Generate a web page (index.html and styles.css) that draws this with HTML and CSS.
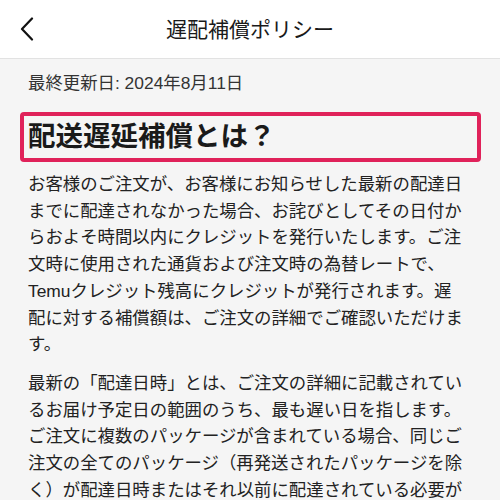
FILE: index.html
```html
<!DOCTYPE html>
<html lang="ja">
<head>
<meta charset="utf-8">
<link rel="stylesheet" href="styles.css">
</head>
<body>
<header class="topbar">
  <svg class="back" width="14" height="24" viewBox="0 0 14 24"><path d="M12 1.5 L2 12 L12 22.5" fill="none" stroke="#111" stroke-width="2.2" stroke-linecap="round" stroke-linejoin="round"/></svg>
  <h1 class="title">遅配補償ポリシー</h1>
</header>
<main class="content">
  <p class="updated">最終更新日: 2024年8月11日</p>
  <div class="highlight">
    <h2 class="heading">配送遅延補償とは？</h2>
  </div>
  <p class="para">お客様のご注文が、お客様にお知らせした最新の配達日までに配達されなかった場合、お詫びとしてその日付からおよそ時間以内にクレジットを発行いたします。ご注文時に使用された通貨および注文時の為替レートで、Temuクレジット残高にクレジットが発行されます。遅配に対する補償額は、ご注文の詳細でご確認いただけます。</p>
  <p class="para">最新の「配達日時」とは、ご注文の詳細に記載されているお届け予定日の範囲のうち、最も遅い日を指します。ご注文に複数のパッケージが含まれている場合、同じご注文の全てのパッケージ（再発送されたパッケージを除く）が配達日時またはそれ以前に配達されている必要があります。</p>
</main>
</body>
</html>
```

FILE: styles.css
```css
html, body {
  margin: 0;
  padding: 0;
  background: #f5f5f5;
  font-family: "Liberation Sans", "Noto Sans CJK JP", sans-serif;
  color: #222;
  height: 500px;
  overflow: hidden;
}
.topbar {
  position: relative;
  height: 58px;
  background: #fff;
  border-bottom: 1px solid #e2e2e2;
  display: flex;
  align-items: center;
  justify-content: center;
}
.back {
  position: absolute;
  left: 20px;
  top: 17px;
}
.title {
  margin: 0;
  font-size: 21px;
  font-weight: 400;
  color: #1a1a1a;
  line-height: 1;
  padding-top: 1px;
}
.content {
  padding: 0 32px 0 28px;
}
.updated {
  margin: 0;
  padding-top: 11px;
  font-size: 17.4px;
  line-height: 26px;
  color: #333;
}
.highlight {
  margin: 16px -13px 0 -8px;
  border: 4px solid #e0225a;
  border-radius: 4px;
  height: 42px;
  display: flex;
  align-items: center;
  padding: 0 4px;
}
.heading {
  margin: 0;
  font-size: 27.5px;
  font-weight: 700;
  line-height: 1;
  color: #1a1a1a;
}
.para {
  margin: 9px 0 12px;
  font-size: 17.4px;
  line-height: 26.7px;
  color: #222;
}
```
